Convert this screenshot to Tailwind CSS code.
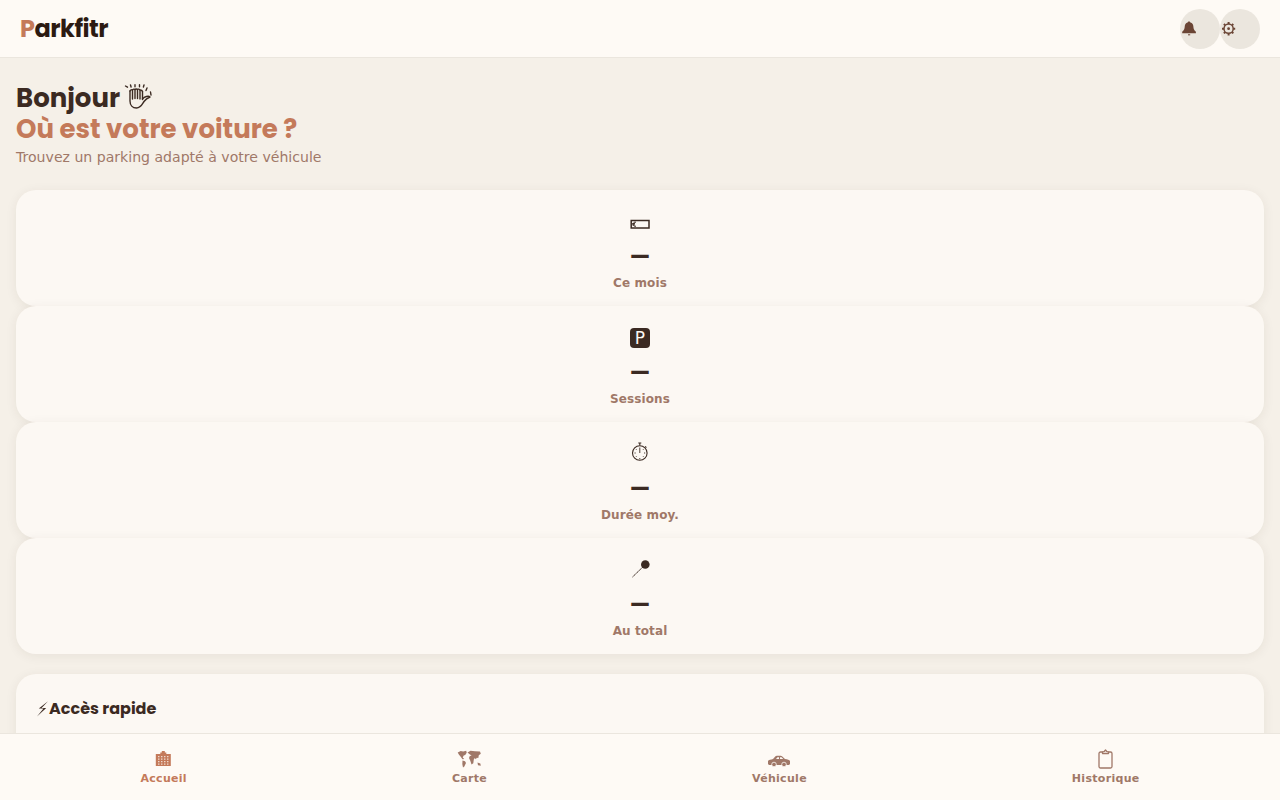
<!DOCTYPE html>
<html lang="fr">
<head>
    <meta charset="UTF-8">
    <meta name="viewport" content="width=device-width, initial-scale=1.0">
    <title>Parkfitr</title>
    <script src="https://cdn.jsdelivr.net/npm/@tailwindcss/browser@4"></script>
</head>
<body class="h-screen overflow-hidden flex flex-col bg-[#f5f0e8] text-[#3b2a22] font-['DejaVu_Sans',sans-serif]">
    <header class="h-[58px] shrink-0 flex justify-between items-center px-5 bg-[#fefaf5] border-b border-[#ebe6de]">
        <div class="text-[24px] font-bold tracking-[-0.5px] text-[#2c1a12] font-['Poppins',sans-serif]"><span class="text-[#c47a5a]">P</span>arkfitr</div>
        <div class="flex">
            <button class="w-10 h-10 rounded-full bg-[#ebe6de] flex items-center justify-start">
                <!-- bell -->
                <svg class="w-[18px] h-[18px]" viewBox="0 0 18 18" fill="#6b4535">
                    <path d="M9 1.500c.8 0 1.300.5 1.400 1.100 2 .5 2.900 2.200 3 4.200.1 2 .4 3.200 2.500 5v1.400H2.200v-1.400c2.100-1.800 2.400-3 2.500-5 .1-2 1-3.700 2.900-4.200.1-.6.6-1.100 1.400-1.100z"/>
                    <rect x="8" y="14.300" width="2.200" height="1"/>
                </svg>
            </button>
            <button class="w-10 h-10 rounded-full bg-[#ebe6de] flex items-center justify-start">
                <!-- gear -->
                <svg class="w-[18px] h-[18px]" viewBox="0 0 18 18" fill="none" stroke="#6b4535">
                    <circle cx="8.600" cy="8.700" r="4.600" stroke-width="1.500"/>
                    <circle cx="8.600" cy="8.700" r="1.400" fill="#6b4535" stroke="none"/>
                    <path stroke-width="2" d="M8.600 2v2M8.600 13.400v2M2 8.700h2M13.200 8.700h2M3.900 4l1.400 1.400M11.900 12l1.400 1.400M13.300 4l-1.400 1.400M5.300 12l-1.400 1.400"/>
                </svg>
            </button>
        </div>
    </header>

    <main class="flex-1 overflow-hidden px-4 pt-[25px]">
        <h1 class="text-[26px] leading-[31px] font-bold font-['Poppins',sans-serif]">Bonjour
            <!-- waving hand -->
            <svg class="inline-block w-7 h-[26px] align-[-3px] ml-[-2px]" viewBox="0 0 28 26" fill="none" stroke="#3b2a22" stroke-width="1.400" stroke-linecap="round" stroke-linejoin="round">
                <path d="M6 7v10c0 4 2.500 7 6.500 7 4.500 0 5.500-3.500 7.500-6.500 1.500-2 3.500-3.500 6-4.500-1.500-1.500-5.500-.5-7.500 2"/>
                <path d="M8.500 6v9M11 5.500v9M13.500 5.500v9M16 6v9M18.500 7.500v8"/>
                <path d="M6 7c.5-1 2-1.500 2.500-1M8.500 6c.5-1 2-1.200 2.500-.5M11 5.500c.5-.7 2-.7 2.500 0M13.500 5.500c.5-.7 2-.5 2.500.5M16 6c1 0 2.300.5 2.500 1.500"/>
                <path d="M1.500 2l2 1.200M6.500 1l.6 2M11 .8v2M15.500 .8v2M20 1l-.6 2M23 4l-1 2.500M26.500 8l.5 3"/>
            </svg><br><span class="text-[#c47a5a]">Où est votre voiture ?</span></h1>
        <p class="mt-[2px] mb-[22px] text-[14.08px] leading-[21px] text-[#a07868]">Trouvez un parking adapté à votre véhicule</p>

        <div class="flex flex-col">
            <div class="h-[116px] flex flex-col items-center pt-4 rounded-[20px] bg-[#fcf8f3] shadow-[0_2px_12px_rgba(60,40,30,0.07)]">
                <!-- banknote -->
                <svg class="w-[30px] h-[30px]" viewBox="0 0 30 30" fill="none" stroke="#3b2a22">
                    <rect x="6.200" y="14.500" width="17.800" height="7.500" stroke-width="1.500"/>
                    <path stroke-width="1" d="M11 16.200c-2-.5-2.800.9-2.800 2s.8 2.500 2.800 2M7.200 17.600h2.800M7.200 18.900h2.800"/>
                </svg>
                <div class="mt-[6px] text-[22px] leading-[30px] font-bold font-['Poppins',sans-serif]">—</div>
                <div class="mt-[3px] text-[12px] leading-[17px] font-bold tracking-[0.1px] text-[#a07868]">Ce mois</div>
            </div>
            <div class="h-[116px] flex flex-col items-center pt-4 rounded-[20px] bg-[#fcf8f3] shadow-[0_2px_12px_rgba(60,40,30,0.07)]">
                <div class="h-[30px] pt-[6px]">
                    <div class="w-5 h-5 rounded-[4px] bg-[#3b2a22] text-[#fcf8f3] text-[17px] leading-5 text-center">P</div>
                </div>
                <div class="mt-[6px] text-[22px] leading-[30px] font-bold font-['Poppins',sans-serif]">—</div>
                <div class="mt-[3px] text-[12px] leading-[17px] font-bold tracking-[0.1px] text-[#a07868]">Sessions</div>
            </div>
            <div class="h-[116px] flex flex-col items-center pt-4 rounded-[20px] bg-[#fcf8f3] shadow-[0_2px_12px_rgba(60,40,30,0.07)]">
                <!-- stopwatch -->
                <svg class="w-[30px] h-[30px]" viewBox="0 0 30 30" fill="none" stroke="#3b2a22">
                    <circle cx="14.800" cy="15" r="7.300" stroke-width="1.100"/>
                    <path stroke-width="1.100" d="M13.300 5h3M14.800 5v2.500M20.200 8.400l1.200 1.200"/>
                    <path stroke-width=".9" d="M14.800 15V9.500M14.800 20v1.300M9.500 15h1.200M19 15h1.200M11 11.200l.7.7M18.600 11.200l-.7.7M11 18.800l.7-.7M18.600 18.800l-.7-.7"/>
                </svg>
                <div class="mt-[6px] text-[22px] leading-[30px] font-bold font-['Poppins',sans-serif]">—</div>
                <div class="mt-[3px] text-[12px] leading-[17px] font-bold tracking-[0.1px] text-[#a07868]">Durée moy.</div>
            </div>
            <div class="h-[116px] flex flex-col items-center pt-4 rounded-[20px] bg-[#fcf8f3] shadow-[0_2px_12px_rgba(60,40,30,0.07)]">
                <!-- pin -->
                <svg class="w-[30px] h-[30px]" viewBox="0 0 30 30">
                    <circle cx="20.300" cy="10.500" r="4.300" fill="#3b2a22"/>
                    <path d="M18 12.800L7.500 23" stroke="#3b2a22" stroke-width="1" stroke-dasharray="1.800 .4"/>
                </svg>
                <div class="mt-[6px] text-[22px] leading-[30px] font-bold font-['Poppins',sans-serif]">—</div>
                <div class="mt-[3px] text-[12px] leading-[17px] font-bold tracking-[0.1px] text-[#a07868]">Au total</div>
            </div>
        </div>

        <section class="mt-5 h-[200px] px-5 pt-[21px] rounded-[20px] bg-[#fcf8f3] shadow-[0_2px_12px_rgba(60,40,30,0.07)]">
            <h2 class="flex items-center text-[16px] leading-[28px] font-bold font-['Poppins',sans-serif]">
                <!-- bolt -->
                <svg class="w-[13px] h-4" viewBox="0 0 13 16" fill="#3b2a22"><path d="M12 .2L2.800 7.500l4.700.1L1 15.600l9.200-8.500-4.600-.1 6.400-6.800z"/></svg>
                Accès rapide
            </h2>
        </section>
    </main>

    <nav class="h-[67px] shrink-0 relative flex justify-around items-start px-2 pt-[15px] bg-[#fefaf5] border-t border-[#ebe6de]">
        <a class="flex flex-col items-center text-[#c47a5a]">
            <!-- building -->
            <svg class="w-6 h-[22px]" viewBox="0 0 24 22">
                <path fill="#c47a5a" d="M3.800 5H8.300V3.500h1.500V2h3v1.500h1.500V5h4.500v12h-15z"/>
                <path stroke="#fdf9f5" stroke-width="1.100" stroke-dasharray="1.200 1.300" d="M6.800 7v9M9.800 7v9M12.800 7v9M15.800 7v9"/>
            </svg>
            <span class="text-[11px] leading-[16px] font-bold tracking-[0.3px]">Accueil</span>
        </a>
        <a class="flex flex-col items-center text-[#a07868]">
            <!-- world map -->
            <svg class="w-6 h-[22px] ml-[-1px]" viewBox="0 0 24 22" fill="#a07868">
                <path d="M.7 3.500l3-1.500 2.500.5 3-.7.5 2-1.500 2.200-1.500.5-1 2 1.500 1.500-1.700.2-2-2.700-1.500-1.800z"/>
                <path d="M5.500 11.500l2.500.8 1 1.700-1.700 3.500-1.300.9-.7-3.300z"/>
                <path d="M10.500 3.500l3-1.700 4.500.5 5 .2.800 2.200-2 1.500-.5 2.800-1.500-.3-1 1.500-1-1.300-1 1.600-.5 3.700-1.800 1.200-1.200-3.700-1.300-2.600.8-2.200 1.800-.5-2-1.200z"/>
                <path d="M20.500 13.500l2.800 1 .5 2.300-2.800-.5z"/>
            </svg>
            <span class="text-[11px] leading-[16px] font-bold tracking-[0.3px]">Carte</span>
        </a>
        <a class="flex flex-col items-center text-[#a07868]">
            <!-- car -->
            <svg class="w-6 h-[22px]" viewBox="0 0 24 22">
                <path fill="#a07868" d="M1 12c.5-1 3-1.500 5-2l2.500-2.700c1-.6 5.500-.6 6.500 0l3 2.700c2.500.3 4.500.8 5 2v3l-1 1H2l-1-1z"/>
                <path fill="#fdf9f5" d="M9 10l1.500-1.800h1.500V10zM13 8.200h1.500L16.300 10H13z"/>
                <circle cx="7" cy="15.500" r="2.300" fill="#a07868" stroke="#fdf9f5" stroke-width=".8"/>
                <circle cx="17" cy="15.500" r="2.300" fill="#a07868" stroke="#fdf9f5" stroke-width=".8"/>
            </svg>
            <span class="text-[11px] leading-[16px] font-bold tracking-[0.3px]">Véhicule</span>
        </a>
        <a class="flex flex-col items-center text-[#a07868]">
            <!-- clipboard -->
            <svg class="w-6 h-[22px]" viewBox="0 0 24 22" fill="none" stroke="#a07868" stroke-width="1.300">
                <rect x="5" y="3" width="13" height="16" rx="1.500"/>
                <path fill="#fefaf5" stroke-linejoin="round" d="M8.500 4.500V3l1.700-.5L11.500 1l1.300 1.500 1.700.5v1.500z"/>
            </svg>
            <span class="text-[11px] leading-[16px] font-bold tracking-[0.3px]">Historique</span>
        </a>
    </nav>
</body>
</html>
